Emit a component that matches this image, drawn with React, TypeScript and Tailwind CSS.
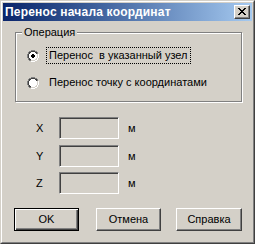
import React from "react";

const Radio = ({ checked }: { checked: boolean }) => (
  <svg width="12" height="12" viewBox="0 0 12 12" className="shrink-0">
    <path d="M4 0h4v1h2v1h1v2h1v4h-1v2h-1v1h-2v1h-4v-1h-2v-1h-1v-2h-1v-4h1v-2h1v-1h2z" fill="#808080" />
    <path d="M4 1h4v1h2v2h1v4h-1v2h-2v1h-4v-1h-2v-2h-1v-4h1v-2h2z" fill="#404040" />
    <path d="M11 4h1v4h-1v2h-1v1h-2v1h-4v-1h4v-1h2v-2h1z" fill="#ffffff" />
    <path d="M10 4h1v4h-1v2h-2v1h-4v-1h4v-1h1v-1h1z" fill="#d4d0c8" />
    <path d="M4 2h4v1h1v1h1v4h-1v1h-1v1h-4v-1h-1v-1h-1v-4h1v-1h1z" fill="#ffffff" />
    {checked && <path d="M5 4h2v1h1v2h-1v1h-2v-1h-1v-2h1z" fill="#000" />}
  </svg>
);

const Edit = () => (
  <div className="w-[60px] h-[22px] border border-t-[#808080] border-l-[#808080] border-b-white border-r-white shadow-[inset_1px_1px_0_#404040,inset_-1px_-1px_0_#d4d0c8] bg-[#d4d0c8]" />
);

export default function App() {
  const font = { fontFamily: '"Liberation Sans", Arial, sans-serif' } as React.CSSProperties;
  return (
    <div
      className="w-[255px] h-[244px] bg-[#d4d0c8] border border-t-[#d4d0c8] border-l-[#d4d0c8] border-r-[#404040] border-b-[#404040] text-[11px] text-black leading-none"
      style={font}
    >
      <div className="h-full border border-t-white border-l-white border-r-[#808080] border-b-[#808080] p-px flex flex-col">
        <div className="h-[18px] flex items-center justify-between pl-[2px] pr-[2px] bg-gradient-to-r from-[#0a246a] to-[#a6caf0]">
          <span className="text-white font-bold text-[12px] tracking-[0.2px]">Перенос начала координат</span>
          <div className="w-[16px] h-[14px] flex items-center justify-center bg-[#d4d0c8] border border-t-white border-l-white border-r-[#404040] border-b-[#404040] shadow-[inset_-1px_-1px_0_#808080]">
            <svg width="8" height="7" viewBox="0 0 8 7" className="mb-px">
              <path d="M0 0h2v1h1v1h2v-1h1v-1h2v1h-1v1h-1v1h-1v1h1v1h1v1h1v1h-2v-1h-1v-1h-2v1h-1v1h-2v-1h1v-1h1v-1h1v-1h-1v-1h-1v-1h-1z" fill="#000" />
            </svg>
          </div>
        </div>

        <div className="relative ml-[12px] mt-[11px] w-[227px] h-[70px] border border-[#808080] shadow-[inset_1px_1px_0_#fff,1px_1px_0_#fff]">
          <span className="absolute left-[6px] top-[-6px] bg-[#d4d0c8] px-[2px]">Операция</span>
          <div className="flex items-center mt-[14px] ml-[11px]">
            <Radio checked />
            <span className="ml-[7px] px-[2px] py-[2px] border border-dotted border-black">Перенос&nbsp; в указанный узел</span>
          </div>
          <div className="flex items-center mt-[10px] ml-[11px]">
            <Radio checked={false} />
            <span className="ml-[7px] px-[2px] py-[2px] border border-transparent">Перенос точку с координатами</span>
          </div>
        </div>

        <div className="flex flex-col mt-[15px] ml-[33px]">
          {["X", "Y", "Z"].map((l, i) => (
            <div key={l} className={`flex items-center ${i === 1 ? "mt-[6px]" : i === 2 ? "mt-[5px]" : ""}`}>
              <span className="w-[23px]">{l}</span>
              <Edit />
              <span className="ml-[9px]">м</span>
            </div>
          ))}
        </div>

        <div className="flex mt-[14px] ml-[11px]">
          <button className="w-[65px] h-[23px] border border-black bg-[#d4d0c8] shadow-[inset_1px_1px_0_#fff,inset_-1px_-1px_0_#404040,inset_-2px_-2px_0_#808080] flex items-center justify-center">
            OK
          </button>
          <button className="ml-[17px] w-[65px] h-[23px] bg-[#d4d0c8] border border-t-white border-l-white border-r-[#404040] border-b-[#404040] shadow-[inset_-1px_-1px_0_#808080] flex items-center justify-center">
            Отмена
          </button>
          <button className="ml-[15px] w-[66px] h-[23px] bg-[#d4d0c8] border border-t-white border-l-white border-r-[#404040] border-b-[#404040] shadow-[inset_-1px_-1px_0_#808080] flex items-center justify-center">
            Справка
          </button>
        </div>
      </div>
    </div>
  );
}
